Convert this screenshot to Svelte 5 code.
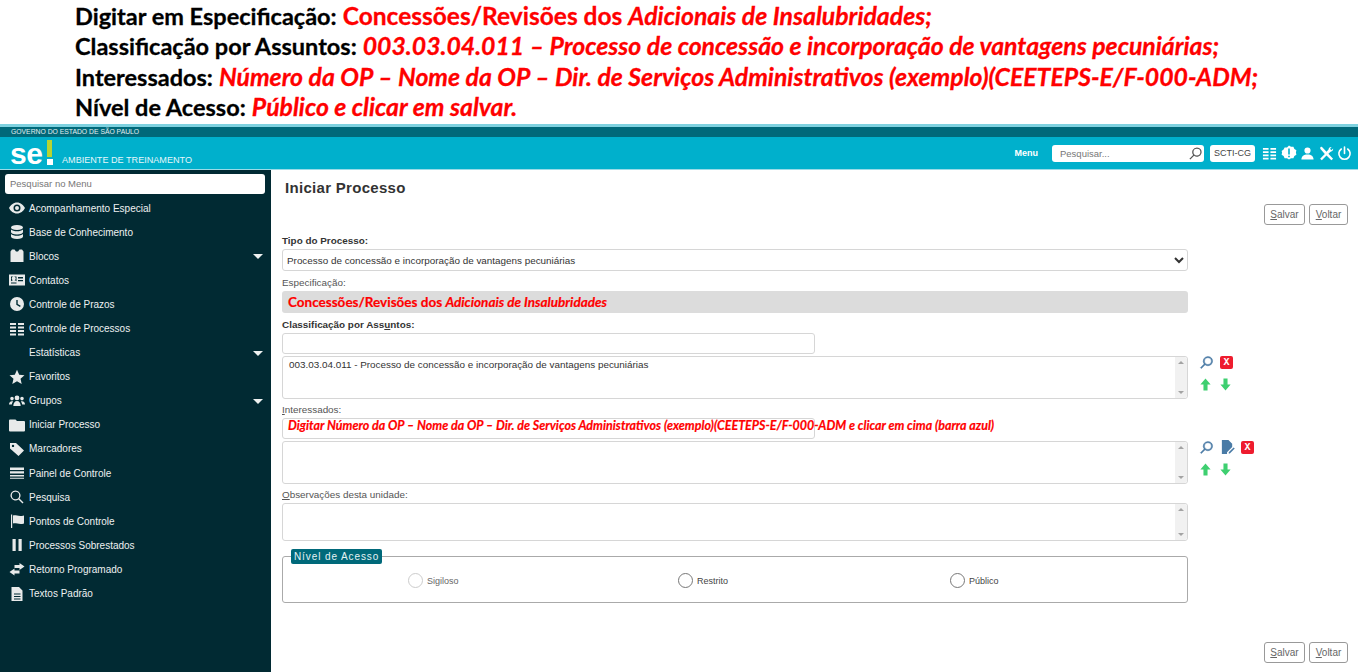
<script lang="ts">
const menu = [
  { label: "Acompanhamento Especial", icon: "eye" },
  { label: "Base de Conhecimento", icon: "db" },
  { label: "Blocos", icon: "book", caret: true },
  { label: "Contatos", icon: "card" },
  { label: "Controle de Prazos", icon: "clock" },
  { label: "Controle de Processos", icon: "table" },
  { label: "Estatísticas", icon: "", caret: true },
  { label: "Favoritos", icon: "star" },
  { label: "Grupos", icon: "users", caret: true },
  { label: "Iniciar Processo", icon: "folder" },
  { label: "Marcadores", icon: "tag" },
  { label: "Painel de Controle", icon: "bars" },
  { label: "Pesquisa", icon: "search" },
  { label: "Pontos de Controle", icon: "flag" },
  { label: "Processos Sobrestados", icon: "pause" },
  { label: "Retorno Programado", icon: "swap" },
  { label: "Textos Padrão", icon: "file" },
];

const paths: Record<string, string> = {
  eye: "M8 2.500C4.400 2.500 1.500 5 0 8c1.500 3 4.400 5.500 8 5.500s6.500-2.500 8-5.500c-1.500-3-4.400-5.500-8-5.500zm0 9A3.500 3.500 0 1 1 8 4.500a3.500 3.500 0 0 1 0 7zM8 6a2 2 0 1 0 0 4 2 2 0 0 0 0-4z",
  db: "M8 1C4.300 1 2 2.200 2 3.500S4.300 6 8 6s6-1.200 6-2.500S11.700 1 8 1zM2 5.500V8c0 1.300 2.300 2.500 6 2.500s6-1.200 6-2.500V5.500C12.800 6.700 10.500 7.300 8 7.300S3.200 6.700 2 5.500zm0 4.500v2.500C2 13.800 4.300 15 8 15s6-1.200 6-2.500V10c-1.200 1.200-3.500 1.800-6 1.800S3.200 11.200 2 10z",
  book: "M1.500 3.500L3 1.500h2.500L7 3.500h2l1.500-2H13l1.500 2V14h-13z",
  card: "M0 2.500h16v11H0zM2 4.500v5c0 0 .5-1 2-1.200a2 2 0 1 1 1.500 0c1.500.2 2 1.200 2 1.200v-5zM9 5v1.500h5V5zm0 3v1.200h5V8zM2 10.500v1h5.500v-1z",
  clock: "M8 1a7 7 0 1 0 0 14A7 7 0 0 0 8 1zm3 10L7.300 8.800V4h1.400v4l3 1.800z",
  table: "M1 2h6v2H1zm8 0h6v2H9zM1 5.500h6v2H1zm8 0h6v2H9zM1 9h6v2H1zm8 0h6v2H9zM1 12.500h6v2H1zm8 0h6v2H9z",
  star: "M8 .8l2.200 4.900 5.300.6-4 3.500 1.200 5.200L8 12.300 3.300 15l1.200-5.200-4-3.500 5.300-.6z",
  users: "M8 2.500a2.400 2.400 0 1 1 0 4.800 2.400 2.400 0 0 1 0-4.800zM3 3.800a1.800 1.800 0 1 1 0 3.600 1.800 1.800 0 0 1 0-3.600zm10 0a1.800 1.800 0 1 1 0 3.600 1.800 1.800 0 0 1 0-3.600zM4.300 13c0-3 1.500-5 3.700-5s3.700 2 3.700 5zM0 11.500c0-2 1-3.300 3-3.300.4 0 .8 0 1.100.2-.8.900-1.200 1.900-1.300 3.100zm16 0c0-2-1-3.300-3-3.300-.4 0-.8 0-1.100.2.800.900 1.200 1.900 1.300 3.100z",
  folder: "M1 2.500h5.500L8 4h7a1 1 0 0 1 1 1v8.500a1 1 0 0 1-1 1H1a1 1 0 0 1-1-1v-10a1 1 0 0 1 1-1z",
  tag: "M1 2h6l8 7.500-5.500 5.500L1 7.500zm3 1.700a1.200 1.200 0 1 0 0 2.400 1.200 1.200 0 0 0 0-2.400z",
  bars: "M1 2.500h14v2.500H1zm0 3.800h14v2.300H1zm0 3.700h14v1.600H1zm0 2.700h14v1H1z",
  search: "M6.500 1.500a5 5 0 0 1 4 8l4 4-1 1-4-4a5 5 0 1 1-3-9zm0 1.300a3.700 3.700 0 1 0 0 7.400 3.700 3.700 0 0 0 0-7.400z",
  flag: "M2 1.500h1.200V15H2zM4 2.500c3-1 5 1.500 11 0v8c-5 1.500-8-1-11 0z",
  pause: "M3.500 2h3.200v12H3.500zm6 0h3.200v12H9.500z",
  swap: "M10.500 2L15.500 5.500 10.500 9V7H5.500V4h5zM5.500 7.500V9.500H10.500V12.500H5.500V14.500L.5 11z",
  file: "M2.500 1H10l3.500 3.500V15h-11zM5 7.500v1h6.500v-1zm0 2.500v1h6.500v-1zm0 2.500v1h6.500v-1z",
};
</script>

<div class="page">
  <header class="banner">
    <p><b>Digitar em Especificação:</b> <span class="red">Concessões/Revisões dos <i>Adicionais de Insalubridades;</i></span></p>
    <p><b>Classificação por Assuntos:</b> <span class="red"><i>003.03.04.011 – Processo de concessão e incorporação de vantagens pecuniárias;</i></span></p>
    <p><b>Interessados:</b> <span class="red"><i>Número da OP – Nome da OP – Dir. de Serviços Administrativos (exemplo)(CEETEPS-E/F-000-ADM;</i></span></p>
    <p><b>Nível de Acesso:</b> <span class="red"><i>Público e clicar em salvar.</i></span></p>
  </header>

  <div class="gov">GOVERNO DO ESTADO DE SÃO PAULO</div>
  <div class="topbar">
    <div class="logo"><span class="sei">se</span><span class="stem"></span><span class="dot"></span></div>
    <span class="env">AMBIENTE DE TREINAMENTO</span>
    <div class="top-right">
      <span class="menu-link">Menu</span>
      <div class="top-search">
        <span>Pesquisar...</span>
        <svg viewBox="0 0 16 16" width="15" height="15"><path fill="#555" transform="matrix(-1 0 0 1 16 0)" d={paths.search} /></svg>
      </div>
      <span class="unit">SCTI-CG</span>
      <div class="top-icons">
        <svg viewBox="0 0 16 16" width="15" height="15"><path fill="#fff" d={paths.table} /></svg>
        <svg viewBox="0 0 16 16" width="16" height="16"><path fill="#fff" d="M8 .5l2 1.300 2.400-.1 1 2.200 2 1.300-.5 2.300.5 2.300-2 1.300-1 2.200-2.400-.1-2 1.300-2-1.300-2.400.1-1-2.200-2-1.300.5-2.300L.6 5.900l2-1.300 1-2.200 2.400.1z" /><path fill="#00b0cc" d="M7.200 3.500h1.600v6H7.200zM7.200 10.700h1.600v1.600H7.200z" /></svg>
        <svg viewBox="0 0 16 16" width="15" height="15"><path fill="#fff" d="M8 1.500a3.300 3.300 0 1 1 0 6.600 3.300 3.300 0 0 1 0-6.600zM1.500 14.500c0-3.500 2.500-5.500 6.500-5.500s6.500 2 6.500 5.500z" /></svg>
        <svg viewBox="0 0 16 16" width="15" height="15"><path fill="#fff" d="M1.500 1L3 .8l5 5.200 2.200-2.200c-.2-1.500 1.300-3 3.300-2.800l-1.700 2 1.300 1.400 2-1.700c.2 2-1.300 3.500-2.800 3.300L10 8.300l5 5.200-1.800 1.800L8 10.200l-5 5.100-1.800-1.800 5-5L1.300 3z" /></svg>
        <svg viewBox="0 0 16 16" width="15" height="15"><path fill="none" stroke="#fff" stroke-width="1.700" stroke-linecap="round" d="M8 1v7M4.600 3.200a6 6 0 1 0 6.800 0" /></svg>
      </div>
    </div>
  </div>

  <div class="body">
    <nav class="side">
      <div class="side-search">Pesquisar no Menu</div>
      <ul>
        {#each menu as m (m.label)}
          <li>
            <span class="mi">
              {#if m.icon}<svg viewBox="0 0 16 16" width="16" height="16"><path fill="#e8eaea" fill-rule="evenodd" d={paths[m.icon]} /></svg>{/if}
            </span>
            <span class="ml">{m.label}</span>
            {#if m.caret}<span class="caret"></span>{/if}
          </li>
        {/each}
      </ul>
    </nav>

    <main class="content">
      <h1>Iniciar Processo</h1>
      <div class="actions">
        <button><u>S</u>alvar</button>
        <button><u>V</u>oltar</button>
      </div>

      <form class="form">
        <label class="lb b first">Tipo do Processo:</label>
        <select class="field wide">
          <option>Processo de concessão e incorporação de vantagens pecuniárias</option>
        </select>

        <label class="lb">Especificação:</label>
        <div class="spec">Concessões/Revisões dos <i>Adicionais de Insalubridades</i></div>

        <label class="lb b">Classificação por Ass<u>u</u>ntos:</label>
        <div class="field short"></div>
        <div class="row">
          <div class="area h43">
            <span>003.03.04.011 - Processo de concessão e incorporação de vantagens pecuniárias</span>
            <div class="sb"><i class="up"></i><i class="down"></i></div>
          </div>
          <div class="tools">
            <div class="tool-row">
              <svg viewBox="0 0 16 16" width="15" height="15"><path fill="#4a7ba6" stroke="#4a7ba6" stroke-width="0.5" fill-rule="evenodd" transform="matrix(-1 0 0 1 16 0)" d={paths.search} /></svg>
              <span class="x">X</span>
            </div>
            <div class="tool-row">
              <svg viewBox="0 0 14 14" width="13" height="13"><path fill="#3ecf70" d="M7 .5l5.500 6.500H9.200v6.500H4.800V7H1.500z" /></svg>
              <svg class="down-arrow" viewBox="0 0 14 14" width="13" height="13"><path fill="#3ecf70" d="M7 13.500L1.500 7h3.300V.5h4.400V7h3.300z" /></svg>
            </div>
          </div>
        </div>

        <label class="lb"><u>I</u>nteressados:</label>
        <div class="over">
          <div class="field short"></div>
          <span class="hint">Digitar Número da OP – Nome da OP – Dir. de Serviços Administrativos (exemplo)(CEETEPS-E/F-000-ADM e clicar em cima (barra azul)</span>
        </div>
        <div class="row">
          <div class="area h43">
            <div class="sb"><i class="up"></i><i class="down"></i></div>
          </div>
          <div class="tools">
            <div class="tool-row">
              <svg viewBox="0 0 16 16" width="15" height="15"><path fill="#4a7ba6" stroke="#4a7ba6" stroke-width="0.5" fill-rule="evenodd" transform="matrix(-1 0 0 1 16 0)" d={paths.search} /></svg>
              <svg viewBox="0 0 16 16" width="15" height="16"><path fill="#4a7ba6" d="M2 .5h7l4 4v3.500l-5.500 5.500V15.500H2z" /><path fill="#4a7ba6" d="M9.300 13.700l5.200-5.200 1.200 1.200-5.200 5.200H9.300z" /></svg>
              <span class="x">X</span>
            </div>
            <div class="tool-row">
              <svg viewBox="0 0 14 14" width="13" height="13"><path fill="#3ecf70" d="M7 .5l5.500 6.500H9.200v6.500H4.800V7H1.500z" /></svg>
              <svg class="down-arrow" viewBox="0 0 14 14" width="13" height="13"><path fill="#3ecf70" d="M7 13.500L1.500 7h3.300V.5h4.400V7h3.300z" /></svg>
            </div>
          </div>
        </div>

        <label class="lb"><u>O</u>bservações desta unidade:</label>
        <div class="area h38">
          <div class="sb"><i class="up"></i><i class="down"></i></div>
        </div>

        <fieldset>
          <legend>Nível de Acesso</legend>
          <div class="radios">
            <span class="radio dim"><i></i>Sigiloso</span>
            <span class="radio"><i></i>Restrito</span>
            <span class="radio"><i></i>Público</span>
          </div>
        </fieldset>
      </form>

      <div class="actions bottom">
        <button><u>S</u>alvar</button>
        <button><u>V</u>oltar</button>
      </div>
    </main>
  </div>
</div>

<style>
  :global(body) {
    margin: 0;
    background: #fff;
    font-family: "Liberation Sans", Arial, sans-serif;
  }
  .page {
    width: 1358px;
    height: 672px;
    overflow: hidden;
    display: flex;
    flex-direction: column;
  }
  .banner {
    height: 124px;
    box-sizing: border-box;
    padding: 1px 0 0 75px;
    font-family: Lato, "Open Sans", sans-serif;
    font-size: 23.500px;
    line-height: 30.300px;
    color: #000;
    white-space: nowrap;
    -webkit-text-stroke: 0.3px currentColor;
  }
  .banner p {
    margin: 0;
  }
  .banner b,
  .banner .red {
    font-weight: 700;
  }
  .red {
    color: #f00;
    font-size: 24.500px;
  }
  .red i {
    font-size: 24.800px;
  }
  .gov {
    height: 10px;
    border-top: 3px solid #7fd2e0;
    background: #00697a;
    color: #e4eef0;
    font-size: 6.800px;
    line-height: 10px;
    padding-left: 11px;
  }
  .topbar {
    height: 32px;
    background: #00b0cc;
    border-bottom: 1px solid #9adbe7;
    display: flex;
    align-items: center;
    position: relative;
  }
  .logo {
    width: 62px;
    height: 32px;
    flex: none;
    position: relative;
  }
  .sei {
    position: absolute;
    left: 10px;
    top: 0;
    color: #fff;
    font-weight: 700;
    font-size: 30px;
    letter-spacing: -0.500px;
    line-height: 33px;
  }
  .stem {
    position: absolute;
    left: 47px;
    top: 3px;
    width: 5px;
    height: 17px;
    background: #b6d433;
  }
  .dot {
    position: absolute;
    left: 47px;
    top: 22px;
    width: 6px;
    height: 6px;
    background: #fff;
  }
  .env {
    color: #e5f6fa;
    font-size: 9.100px;
    margin-top: 13px;
  }
  .top-right {
    margin-left: auto;
    display: flex;
    align-items: center;
    padding-right: 6px;
  }
  .menu-link {
    color: #fff;
    font-weight: 700;
    font-size: 9px;
    margin-right: 14px;
  }
  .top-search {
    width: 152px;
    height: 17px;
    box-sizing: border-box;
    background: #fff;
    border-radius: 3px;
    display: flex;
    align-items: center;
    justify-content: space-between;
    padding: 0 1px 0 8px;
    font-size: 9.500px;
    color: #777;
  }
  .unit {
    margin-left: 6px;
    width: 45px;
    height: 17px;
    line-height: 17px;
    text-align: center;
    background: #fff;
    border-radius: 3px;
    font-size: 9px;
    color: #444;
  }
  .top-icons {
    display: flex;
    gap: 3.500px;
    margin-left: 7px;
    align-items: center;
  }
  .body {
    flex: 1;
    display: flex;
    min-height: 0;
  }
  .side {
    width: 271px;
    background: #012a33;
    flex: none;
  }
  .side-search {
    margin: 4px 6px 0 5px;
    height: 20px;
    box-sizing: border-box;
    background: #fff;
    border-radius: 3px;
    font-size: 9.500px;
    line-height: 20px;
    padding-left: 5px;
    color: #777;
  }
  .side ul {
    list-style: none;
    margin: 2px 0 0;
    padding: 0;
  }
  .side li {
    height: 24.100px;
    display: flex;
    align-items: center;
    position: relative;
    color: #eef1f1;
    font-size: 10px;
  }
  .mi {
    width: 29px;
    padding-left: 9px;
    box-sizing: border-box;
    display: flex;
    align-items: center;
  }
  .caret {
    position: absolute;
    left: 253px;
    top: 10px;
    border: 5px solid transparent;
    border-top-color: #eef1f1;
    border-bottom: 0;
  }
  .content {
    flex: 1;
    min-width: 0;
    padding: 0 10px 0 11px;
    color: #444;
    font-size: 9.900px;
  }
  h1 {
    margin: 9px 0 0 3px;
    font-size: 15px;
    line-height: 17px;
    font-weight: 700;
    letter-spacing: 0.300px;
    color: #333;
  }
  .actions {
    display: flex;
    justify-content: flex-end;
    gap: 4px;
    margin-top: 8px;
  }
  .actions.bottom {
    margin-top: 39px;
  }
  button {
    height: 21px;
    width: 41px;
    padding: 0;
    background: #fff;
    border: 1px solid #999;
    border-radius: 3px;
    color: #666;
    font: 10px "Liberation Sans", Arial, sans-serif;
  }
  button + button {
    width: 39px;
  }
  .form {
    width: 906px;
    display: flex;
    flex-direction: column;
  }
  .lb {
    height: 15px;
    margin-top: 4px;
    line-height: 15px;
    display: block;
    color: #555;
  }
  .row + .lb {
    margin-top: 3px;
  }
  .lb.first {
    margin-top: 8px;
  }
  .lb.b {
    font-weight: 700;
    color: #333;
  }
  .field {
    height: 22px;
    margin-top: 1px;
    box-sizing: border-box;
    border: 1px solid #d6d6d6;
    border-radius: 3px;
    background: #fff;
  }
  .wide {
    width: 906px;
    font: 9.900px "Liberation Sans", Arial, sans-serif;
    color: #333;
    padding-left: 0;
  }
  .short {
    width: 533px;
    height: 21px;
  }
  .spec {
    height: 22px;
    margin-top: 1px;
    background: #dcdcdc;
    border-radius: 3px;
    color: #f00;
    font: 700 13.500px/22px Lato, sans-serif;
    padding-left: 6px;
    -webkit-text-stroke: 0.2px currentColor;
  }
  .row {
    display: flex;
    margin-top: 2px;
  }
  .area {
    width: 906px;
    flex: none;
    box-sizing: border-box;
    border: 1px solid #d6d6d6;
    border-radius: 3px;
    position: relative;
    padding: 2px 6px;
    color: #333;
  }
  .h43 {
    height: 43px;
  }
  .h38 {
    height: 38px;
    margin-top: 1px;
  }
  .sb {
    position: absolute;
    right: 0;
    top: 0;
    bottom: 0;
    width: 12px;
    background: #f1f1f1;
    border-radius: 0 3px 3px 0;
  }
  .sb i {
    position: absolute;
    left: 3px;
    border: 3px solid transparent;
  }
  .up {
    top: 4px;
    border-top: 0 !important;
    border-bottom-color: #a3a3a3 !important;
  }
  .down {
    bottom: 4px;
    border-bottom: 0 !important;
    border-top-color: #a3a3a3 !important;
  }
  .tools {
    margin: -1px 0 0 11px;
    display: flex;
    flex-direction: column;
    gap: 8px;
  }
  .tool-row {
    display: flex;
    align-items: center;
    gap: 6px;
    height: 14px;
  }
  .down-arrow {
    margin-left: 1px;
  }
  .x {
    width: 13px;
    height: 13px;
    background: #ee1c2e;
    border-radius: 2px;
    color: #fff;
    font: 700 10px/13px "Liberation Mono", monospace;
    text-align: center;
  }
  .over {
    position: relative;
    margin-top: 1px;
  }
  .over .field {
    margin-top: 0;
  }
  .hint {
    position: absolute;
    left: 6px;
    top: 0;
    color: #f00;
    font: italic 700 12.470px/16px Lato, sans-serif;
    white-space: nowrap;
    -webkit-text-stroke: 0.2px currentColor;
  }
  fieldset {
    margin: 15px 0 0;
    padding: 0;
    height: 47px;
    box-sizing: border-box;
    border: 1px solid #aaa;
    border-radius: 3px;
    position: relative;
  }
  legend {
    position: absolute;
    left: 8px;
    top: -8px;
    height: 15px;
    padding: 0 3px;
    background: #00697a;
    border-radius: 2px;
    color: #e6f3f5;
    font-size: 10px;
    line-height: 15px;
    letter-spacing: 0.900px;
  }
  .radios {
    display: grid;
    grid-template-columns: 270px 272px 1fr;
    padding: 16px 0 0 125px;
  }
  .radio {
    display: flex;
    align-items: center;
    gap: 4px;
    color: #444;
    font-size: 9px;
  }
  .radio i {
    width: 15px;
    height: 15px;
    box-sizing: border-box;
    border: 1px solid #777;
    border-radius: 50%;
  }
  .radio.dim i {
    border-color: #ccc;
  }
  .radio.dim {
    color: #666;
  }
</style>
